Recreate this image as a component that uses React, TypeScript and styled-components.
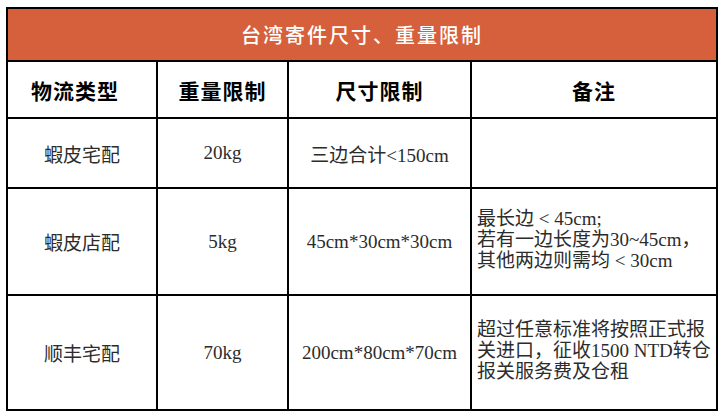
import React from 'react';
import styled, { createGlobalStyle } from 'styled-components';

const GlobalStyle = createGlobalStyle`
  html, body {
    margin: 0;
    padding: 0;
    background: #fff;
  }
`;

type Row = {
  type: string;
  weight: string;
  size: string;
  note: string[];
  height: number;
};

const rows: Row[] = [
  { type: '蝦皮宅配', weight: '20kg', size: '三边合计<150cm', note: [], height: 70 },
  {
    type: '蝦皮店配',
    weight: '5kg',
    size: '45cm*30cm*30cm',
    note: ['最长边 < 45cm;', '若有一边长度为30~45cm，', '其他两边则需均 < 30cm'],
    height: 107,
  },
  {
    type: '顺丰宅配',
    weight: '70kg',
    size: '200cm*80cm*70cm',
    note: ['超过任意标准将按照正式报', '关进口，征收1500 NTD转仓', '报关服务费及仓租'],
    height: 115,
  },
];

export default function App() {
  return (
    <Page>
      <GlobalStyle />
      <Table>
        <colgroup>
          <col style={{ width: 150 }} />
          <col style={{ width: 131 }} />
          <col style={{ width: 183 }} />
          <col style={{ width: 246 }} />
        </colgroup>
        <thead>
          <TitleRow>
            <TitleCell colSpan={4}>台湾寄件尺寸、重量限制</TitleCell>
          </TitleRow>
          <HeadRow>
            <HeadCell $shift={14}>物流类型</HeadCell>
            <HeadCell>重量限制</HeadCell>
            <HeadCell>尺寸限制</HeadCell>
            <HeadCell>备注</HeadCell>
          </HeadRow>
        </thead>
        <tbody>
          {rows.map((r) => (
            <BodyRow key={r.type} $h={r.height}>
              <Cell>{r.type}</Cell>
              <Cell>{r.weight}</Cell>
              <Cell>{r.size}</Cell>
              <NoteCell>
                {r.note.map((line, i) => (
                  <NoteLine key={i}>{line}</NoteLine>
                ))}
              </NoteCell>
            </BodyRow>
          ))}
        </tbody>
      </Table>
    </Page>
  );
}

const Page = styled.div`
  padding: 7px 0 0 6px;
`;

const Table = styled.table`
  width: 710px;
  table-layout: fixed;
  border-collapse: collapse;
  border: 2px solid #000;
  font-family: 'Liberation Serif', 'Noto Sans CJK SC', serif;
  td,
  th {
    border: 2px solid #000;
    padding: 0;
  }
`;

const TitleRow = styled.tr`
  height: 53px;
`;

const TitleCell = styled.th`
  background: #d5603b;
  color: #fff;
  font-family: 'Noto Sans CJK SC', sans-serif;
  font-weight: 500;
  font-size: 20px;
  letter-spacing: 2px;
  text-align: center;
`;

const HeadRow = styled.tr`
  height: 57px;
`;

const HeadCell = styled.th<{ $shift?: number }>`
  font-family: 'Noto Sans CJK SC', sans-serif;
  font-weight: 700;
  font-size: 21px;
  letter-spacing: 1px;
  color: #000;
  text-align: center;
  && {
    padding-right: ${(p) => p.$shift ?? 0}px;
  }
`;

const BodyRow = styled.tr<{ $h: number }>`
  height: ${(p) => p.$h}px;
`;

const Cell = styled.td`
  font-size: 19px;
  color: #2c2c2c;
  text-align: center;
  vertical-align: middle;
`;

const NoteCell = styled(Cell)`
  text-align: left;
  && {
    padding: 0 0 4px 5px;
  }
`;

const NoteLine = styled.div`
  line-height: 21px;
  white-space: nowrap;
`;
